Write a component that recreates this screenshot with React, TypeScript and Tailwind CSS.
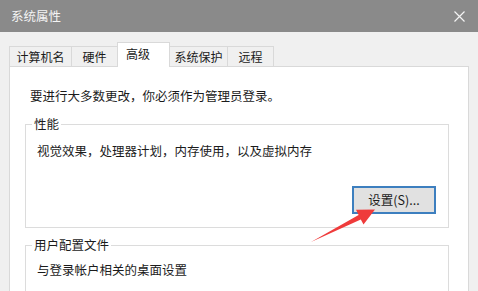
import React from 'react';

const tabs = [
  { name: '计算机名', w: 'w-[63px]' },
  { name: '硬件', w: 'w-[47px]' },
  { name: '高级', w: 'w-[53px]', active: true },
  { name: '系统保护', w: 'w-[59px]' },
  { name: '远程', w: 'w-[47px]' },
];

const GroupBox: React.FC<{ label: string; className?: string; children: React.ReactNode }> = ({ label, className, children }) => (
  <div className={`relative border border-[#dcdcdc] ${className ?? ''}`}>
    <span className="absolute -top-[10px] left-[6px] bg-white px-[2px] leading-[18px]">{label}</span>
    {children}
  </div>
);

const App: React.FC = () => {
  return (
    <div
      className="relative h-[291px] w-[478px] overflow-hidden bg-[#f0f0f0] text-[12.5px] text-[#1b1b1b]"
      style={{ fontFamily: '"Noto Sans CJK SC", "Noto Sans", sans-serif' }}
    >
      {/* title bar */}
      <div className="flex h-[32px] items-center justify-between bg-[#8a8a8a] pl-[11px] pr-[9px]">
        <span className="text-[12.5px] text-[#f4f4f4]">系统属性</span>
        <svg width="11" height="11" viewBox="0 0 11 11" className="mr-[4px]">
          <path d="M0.5 0.5 L10.5 10.5 M10.5 0.5 L0.5 10.5" stroke="#f4f4f4" strokeWidth="1.2" />
        </svg>
      </div>

      <div className="px-[9px] pt-[10px]">
        {/* tabs */}
        <div className="flex h-[24px] items-end">
          {tabs.map((t, i) => (
            <div
              key={t.name}
              className={`${t.w} ${i > 0 ? '-ml-px' : ''} flex items-center border border-b-0 border-[#d9d9d9] text-[12px] leading-none ${
                t.active ? 'relative z-10 -mb-px h-[25px] bg-white pb-[2px] pl-[8px]' : 'h-[20px] justify-center bg-[#f0f0f0] pt-[1px]'
              }`}
            >
              {t.name}
            </div>
          ))}
        </div>

        {/* tab panel */}
        <div className="h-[240px] border border-[#d9d9d9] bg-white pl-[15px] pr-[19px] pt-[20px]">
          <p className="ml-[5px] leading-[18px]">要进行大多数更改，你必须作为管理员登录。</p>

          <GroupBox label="性能" className="mt-[19px] flex h-[104px] flex-col">
            <p className="pl-[11px] pt-[17px] leading-[18px]">视觉效果，处理器计划，内存使用，以及虚拟内存</p>
            <button className="mb-[13px] mr-[12px] mt-auto flex h-[28px] w-[84px] items-center justify-center self-end border-2 border-[#3d7fbf] bg-[#e1e1e1] text-[12.5px]">
              设置(S)...
            </button>
          </GroupBox>

          <GroupBox label="用户配置文件" className="mt-[17px] h-[80px]">
            <p className="pl-[11px] pt-[15px] leading-[18px]">与登录帐户相关的桌面设置</p>
          </GroupBox>
        </div>
      </div>

      {/* red annotation arrow */}
      <svg className="pointer-events-none absolute left-0 top-0" width="478" height="291" viewBox="0 0 478 291">
        <polygon
          points="311,242 358.6,215 356,209.8 375,209.5 363.5,224.5 360.8,219.4"
          fill="#ef3b3b"
        />
      </svg>
    </div>
  );
};

export default App;
